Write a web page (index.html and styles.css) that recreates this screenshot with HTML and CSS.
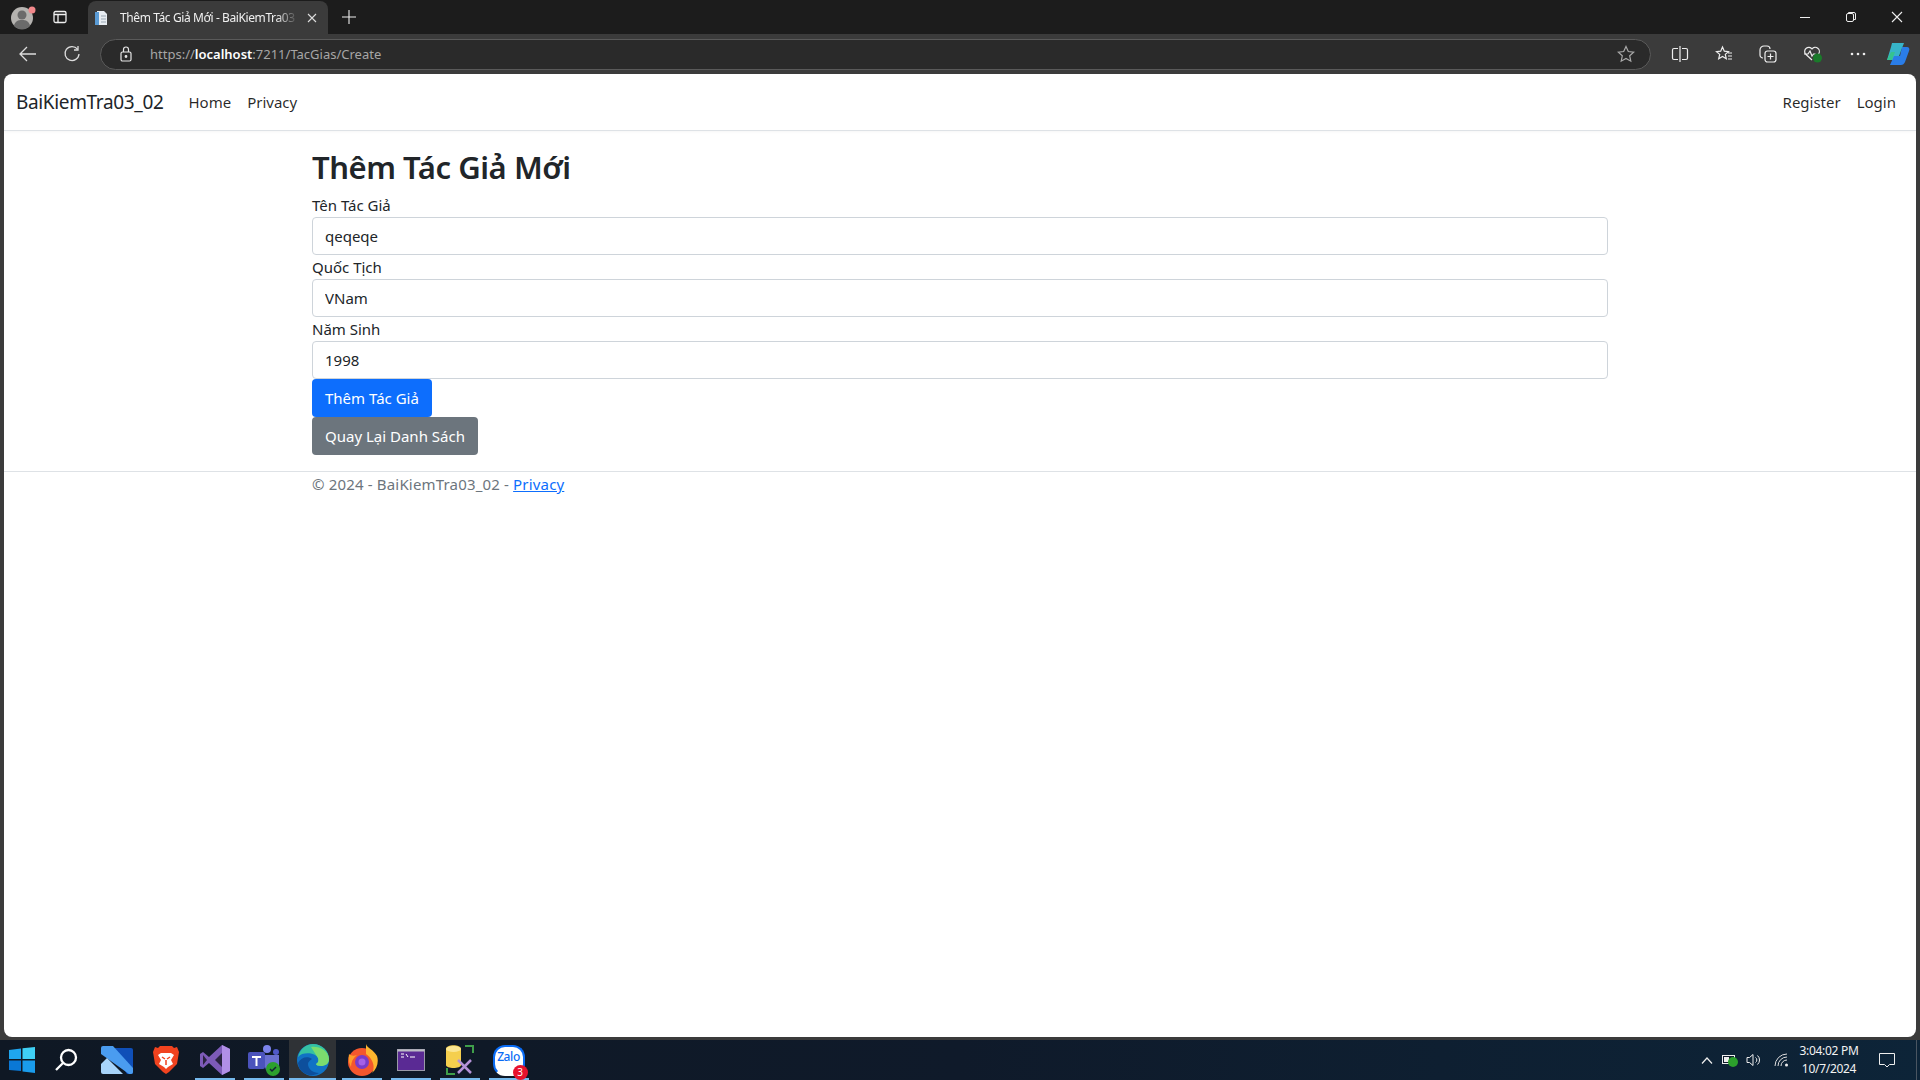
FILE: index.html
```html
<!DOCTYPE html>
<html lang="en">
<head>
  <meta charset="UTF-8">
  <meta name="viewport" content="width=device-width, initial-scale=1.0">
  <title>Thêm Tác Giả Mới - BaiKiemTra03_02</title>
  <link rel="stylesheet" href="styles.css">
</head>
<body>
  <div class="titlebar">
    <div class="avatar">
      <svg width="28" height="28" viewBox="0 0 28 28"><circle cx="13" cy="15" r="11" fill="#b5b3b0"/><circle cx="13" cy="12" r="4.5" fill="#6b6b6b"/><path d="M5 23c1-5 4-6 8-6s7 1 8 6a11 11 0 0 1-16 0z" fill="#6b6b6b"/><circle cx="23" cy="7" r="3.5" fill="#f2888b"/></svg>
    </div>
    <div class="bar-btn sidebar-btn">
      <svg width="16" height="16" viewBox="0 0 16 16" fill="none" stroke="#eee" stroke-width="1.3"><rect x="2" y="2.5" width="12" height="11" rx="1.5"/><path d="M2 5.5h12M6 5.5v8"/></svg>
    </div>
    <div class="tab">
      <svg class="tab-icon" width="16" height="16" viewBox="0 0 16 16"><path d="M3 1h7l3 3v11H3z" fill="#e8edf2"/><path d="M1 2h4v13H1z" fill="#5a9bd5"/><path d="M7 6h5M7 9h5M7 12h5" stroke="#9aa7b3"/></svg>
      <span class="tab-title">Thêm Tác Giả Mới - BaiKiemTra03</span>
      <svg width="10" height="10" viewBox="0 0 10 10" stroke="#ddd" stroke-width="1.1"><path d="M1 1l8 8M9 1l-8 8"/></svg>
    </div>
    <div class="bar-btn new-tab">
      <svg width="14" height="14" viewBox="0 0 14 14" stroke="#eee" stroke-width="1.1"><path d="M7 0v14M0 7h14"/></svg>
    </div>
    <div class="window-btns">
      <svg width="46" height="12" viewBox="0 0 46 12" stroke="#eee"><path d="M18 6.500h10"/></svg>
      <svg width="46" height="12" viewBox="0 0 46 12" fill="none" stroke="#eee"><rect x="18.500" y="2.500" width="7" height="8" rx="1.500"/><path d="M20.500 2.500v-1h5.500a1.500 1.500 0 0 1 1.500 1.500v5.500h-1.500"/></svg>
      <svg width="46" height="12" viewBox="0 0 46 12" stroke="#eee" stroke-width="1.100"><path d="M18 1l10 10M28 1l-10 10"/></svg>
    </div>
  </div>

  <div class="toolbar">
    <svg class="back" width="18" height="16" viewBox="0 0 18 16" fill="none" stroke="#ddd" stroke-width="1.300"><path d="M17 8H1M8 1L1 8l7 7"/></svg>
    <svg class="reload" width="18" height="18" viewBox="0 0 18 18" fill="none" stroke="#ddd" stroke-width="1.300"><path d="M14.500 4.200A7 7 0 1 0 16 9"/><path d="M15 1v4h-4"/></svg>
    <div class="address">
      <svg class="lock" width="14" height="16" viewBox="0 0 14 16" fill="none" stroke="#e6e6e6" stroke-width="1.200"><rect x="2" y="6" width="10" height="9" rx="1.500"/><path d="M4.500 6V3.500a2.500 2.500 0 0 1 5 0V6"/><circle cx="7" cy="10.500" r=".8" fill="#e6e6e6"/></svg>
      <span class="url">https://<b>localhost</b>:7211/TacGias/Create</span>
      <svg class="star" width="18" height="18" viewBox="0 0 18 18" fill="none" stroke="#aaa" stroke-width="1.200"><path d="M9 1.500l2.300 5 5.400.6-4 3.700 1.100 5.400L9 13.500l-4.800 2.700 1.100-5.400-4-3.700 5.400-.6z"/></svg>
    </div>
    <div class="tools">
      <svg width="18" height="18" viewBox="0 0 18 18" fill="none" stroke="#eee" stroke-width="1.200"><path d="M7 3.500H3A1.500 1.500 0 0 0 1.500 5v8A1.500 1.500 0 0 0 3 14.500h4M11 3.500h4A1.500 1.500 0 0 1 16.500 5v8a1.500 1.500 0 0 1-1.500 1.500h-4M9 1v16"/></svg>
      <svg width="18" height="18" viewBox="0 0 18 18" fill="none" stroke="#eee" stroke-width="1.200"><path d="M7.500 2l1.800 4.200 4.200.4-3.200 2.800 1 4.400-3.800-2.300-3.800 2.300 1-4.400L1.500 6.600l4.200-.4zM13 8h4M13 11h4M13 14h4"/></svg>
      <svg width="18" height="18" viewBox="0 0 18 18" fill="none" stroke="#eee" stroke-width="1.200"><rect x="6" y="6" width="11" height="11" rx="2.500"/><path d="M11.500 8.500v6M8.500 11.500h6M4 13a3 3 0 0 1-3-3V5a4 4 0 0 1 4-4h3a3 3 0 0 1 3 3"/></svg>
      <svg width="20" height="18" viewBox="0 0 20 18" fill="none" stroke="#eee" stroke-width="1.200"><path d="M9 15L2.500 9A4 4 0 0 1 9 4a4 4 0 0 1 6.500 5M1 9h4l2-3 2 5 1.500-2h2"/><circle cx="14.500" cy="13" r="4.500" fill="#1a7a2a" stroke="none"/></svg>
      <svg width="18" height="18" viewBox="0 0 18 18" fill="#eee"><circle cx="3" cy="9" r="1.300"/><circle cx="9" cy="9" r="1.300"/><circle cx="15" cy="9" r="1.300"/></svg>
      <svg class="copilot" width="26" height="24" viewBox="0 0 26 24"><path d="M8 1h12l-5 13a5 5 0 0 1-5 4H3l4-13z" fill="#37b4c8"/><path d="M18 5h5c2 0 3 2 2 4l-4 11c-1 2-2 3-4 3H6l4-9h6z" fill="#2a7de8"/><path d="M3 18l4-8h4l-3 8z" fill="#35c38f"/></svg>
    </div>
  </div>

  <div class="page">
    <nav class="navbar">
      <a class="brand">BaiKiemTra03_02</a>
      <a class="nav-link">Home</a>
      <a class="nav-link">Privacy</a>
      <div class="nav-right">
        <a class="nav-link">Register</a>
        <a class="nav-link">Login</a>
      </div>
    </nav>
    <main class="container">
      <h1>Thêm Tác Giả Mới</h1>
      <label class="form-label">Tên Tác Giả</label>
      <input class="form-control" value="qeqeqe">
      <label class="form-label">Quốc Tịch</label>
      <input class="form-control" value="VNam">
      <label class="form-label">Năm Sinh</label>
      <input class="form-control" value="1998">
      <a class="btn btn-primary">Thêm Tác Giả</a>
      <a class="btn btn-secondary">Quay Lại Danh Sách</a>
    </main>
    <footer class="footer">
      <div class="container">© 2024 - BaiKiemTra03_02 - <a class="footer-link">Privacy</a></div>
    </footer>
  </div>

  <div class="taskbar">
    <div class="task-item first">
      <svg width="28" height="28" viewBox="0 0 28 28"><path d="M1 4l12-1.500V13H1z" fill="#1fa6ef"/><path d="M14.500 2.300L27 1v12H14.500z" fill="#3fd0f5"/><path d="M1 14.500h12V25L1 24z" fill="#0a78d6"/><path d="M14.500 14.500H27V27l-12.500-1.500z" fill="#1a9cec"/></svg>
    </div>
    <div class="task-item first">
      <svg width="24" height="24" viewBox="0 0 24 24" fill="none" stroke="#fff" stroke-width="2.300"><circle cx="14.500" cy="9.500" r="7.500"/><path d="M9 15l-7 7"/></svg>
    </div>
    <div class="task-item explorer">
      <svg width="32" height="28" viewBox="0 0 32 28"><path d="M10 2h20a2 2 0 0 1 2 2v22a2 2 0 0 1-2 2h-4z" fill="#0f4fb8"/><path d="M2 0h10l20 22v4a2 2 0 0 1-2 2h-2L0 8V2a2 2 0 0 1 2-2z" fill="#4a9cf0"/><path d="M0 18l6-6 16 16H2a2 2 0 0 1-2-2z" fill="#a8d4fa"/></svg>
    </div>
    <div class="task-item plain">
      <svg width="26" height="30" viewBox="0 0 26 30"><path d="M7 1h12l2 2 3-1 2 5-2 12-8 8-3 2-3-2-8-8L0 7l2-5 3 1z" fill="#f1431f"/><path d="M8 8h10l3 2-3 5 2 4-5 3-2 2-2-2-5-3 2-4-3-5z" fill="#fff"/><path d="M9 12l3 2M17 12l-3 2M13 15v5" stroke="#f1431f" stroke-width="1.500"/></svg>
    </div>
    <div class="task-item">
      <svg width="32" height="32" viewBox="0 0 32 32"><path d="M23 1l8 4v22l-8 4-13-12-6 5-3-2V10l3-2 6 5z" fill="#7d5bb8"/><path d="M23 1l8 4v22l-8 4z" fill="#b18fe6"/><path d="M23 9l-7 7 7 7z" fill="#2a2440"/><path d="M4 11l4 5-4 5z" fill="#2a2440"/></svg>
    </div>
    <div class="task-item">
      <svg width="34" height="32" viewBox="0 0 34 32"><circle cx="20" cy="5" r="4" fill="#7b83eb"/><circle cx="29" cy="8" r="3" fill="#5059c9"/><path d="M14 11h18v10a7 7 0 0 1-14 2h-4z" fill="#6a70d0"/><rect x="1" y="8" width="17" height="17" rx="2" fill="#4b53bc"/><path d="M5 12h9v2h-3.500v8h-2v-8H5z" fill="#fff"/><circle cx="26" cy="25" r="7" fill="#2ca02c"/><path d="M23 25l2 2 4-4" fill="none" stroke="#123" stroke-width="1.500"/></svg>
    </div>
    <div class="task-item edge">
      <svg width="32" height="32" viewBox="0 0 32 32"><circle cx="16" cy="16" r="16" fill="#1172c4"/><path d="M1 13C3 5 9 0 16 0c9 0 16 7 16 15 0 5-4 7-8 7-3 0-5-1-5-2 2-1 3-3 2-6-2-5-15-7-20-1z" fill="#35c1a2"/><path d="M14 3c8-1 17 3 18 12 0 5-4 7-8 7-3 0-5-1-5-2 2-1 3-3 2-6z" fill="#7bdc6e"/><path d="M11 20c0 5 5 9 11 9-8 5-20 1-21-10 3-6 10-7 14-4-2 1-4 3-4 5z" fill="#0d4f9c"/></svg>
    </div>
    <div class="task-item">
      <svg width="32" height="32" viewBox="0 0 32 32"><circle cx="16" cy="18" r="14" fill="#f4572d"/><path d="M20 0c1 4 8 6 11 12 2 6 0 13-5 17 4-7 0-15-6-19z" fill="#ffb52e"/><path d="M3 10c2 2 5 2 8 1-4 3-6 7-6 12-2-4-3-8-2-13z" fill="#ff9d28"/><circle cx="16" cy="18" r="7" fill="#7a3cc7"/><circle cx="16" cy="18" r="3.500" fill="#a561e6"/></svg>
    </div>
    <div class="task-item">
      <svg width="28" height="22" viewBox="0 0 28 22"><rect x=".5" y=".5" width="27" height="21" fill="#5a2a94" stroke="#9a9aa8"/><path d="M.5.500h27v2H.5z" fill="#bdbdc6"/><path d="M4 5h3M4 8h3M9 5l2 3M13 8h5" stroke="#fff"/></svg>
    </div>
    <div class="task-item">
      <svg width="30" height="32" viewBox="0 0 30 32"><path d="M1 5c0-5 15-5 15 0v16c0 4-15 4-15 0z" fill="#f5cf4e"/><ellipse cx="8.500" cy="5" rx="7.500" ry="3" fill="#fbe692"/><path d="M20 2h8v7M2 24v6h8" fill="none" stroke="#3f9f4a" stroke-width="2"/><path d="M13 29l13-13M13 16l13 13" stroke="#b593d8" stroke-width="2.500"/></svg>
    </div>
    <div class="task-item zalo">
      <div class="zalo-bubble">
        <span class="zalo-text">Zalo</span>
        <span class="zalo-badge">3</span>
      </div>
    </div>
    <div class="tray">
      <svg class="chevron" width="12" height="7" viewBox="0 0 12 7" fill="none" stroke="#eee" stroke-width="1.200"><path d="M1 6.500L6 1l5 5.500"/></svg>
      <svg class="battery" width="16" height="13" viewBox="0 0 16 13"><rect x=".5" y="1.500" width="12" height="8" fill="#0f1a2a" stroke="#eee"/><rect x="2" y="3" width="5" height="5" fill="#eee"/><circle cx="11" cy="8" r="5" fill="#2ca02c"/></svg>
      <svg class="speaker" width="16" height="14" viewBox="0 0 16 14" fill="none" stroke="#eee"><path d="M1 4.500h2.500L7 1.500v11l-3.500-3H1zM9.500 4.500a3 3 0 0 1 0 5M11.500 2.500a6 6 0 0 1 0 9"/></svg>
      <svg class="wifi" width="16" height="14" viewBox="0 0 16 14" fill="none" stroke="#ddd"><path d="M1 13A12 12 0 0 1 13 1M4 13a9 9 0 0 1 9-9M7 13a6 6 0 0 1 6-6"/><circle cx="12.500" cy="12" r="1.500" fill="#eee" stroke="none"/></svg>
      <div class="clock">
        <span>3:04:02 PM</span>
        <span>10/7/2024</span>
      </div>
      <svg class="notify" width="16" height="16" viewBox="0 0 16 16" fill="none" stroke="#eee"><path d="M.5 1.500h15v11h-5L8 15l-2.500-2.500h-5z"/></svg>
      <div class="show-desktop"></div>
    </div>
  </div>
</body>
</html>
```

FILE: styles.css
```css
* {
  box-sizing: border-box;
}
html, body {
  margin: 0;
  height: 100%;
  overflow: hidden;
}
body {
  display: flex;
  flex-direction: column;
  height: 1080px;
  background: #3b3b3b;
  font-family: "Noto Sans", sans-serif;
  font-size: 15px;
  line-height: 24px;
  color: #212529;
}

/* browser chrome */
.titlebar {
  display: flex;
  align-items: center;
  height: 34px;
  background: #1c1c1c;
  color: #eee;
}
.avatar {
  display: flex;
  width: 44px;
  padding-left: 9px;
}
.bar-btn {
  display: flex;
  align-items: center;
  justify-content: center;
}
.sidebar-btn {
  width: 32px;
}
.tab {
  display: flex;
  align-items: center;
  align-self: flex-end;
  width: 240px;
  height: 33px;
  margin-left: 12px;
  padding: 0 11px 0 6px;
  background: #3b3b3b;
  border-radius: 8px 8px 0 0;
}
.tab-icon {
  flex: none;
  margin-right: 10px;
}
.tab-title {
  flex: 1;
  overflow: hidden;
  white-space: nowrap;
  font-size: 12px;
  letter-spacing: -0.4px;
  color: #f0f0f0;
  -webkit-mask-image: linear-gradient(to right, #000 88%, transparent 100%);
  mask-image: linear-gradient(to right, #000 88%, transparent 100%);
  margin-right: 9px;
}
.new-tab {
  width: 42px;
}
.window-btns {
  display: flex;
  margin-left: auto;
}
.toolbar {
  display: flex;
  align-items: center;
  height: 40px;
  padding: 0 9px 0 19px;
}
.back {
  margin-right: 26px;
}
.reload {
  margin-right: 19px;
}
.address {
  display: flex;
  flex: none;
  align-items: center;
  width: 1551px;
  height: 31px;
  padding: 0 15px 0 18px;
  background: #2a2a2a;
  border: 1px solid #5a5a5a;
  border-radius: 16px;
}
.lock {
  margin-right: 17px;
}
.url {
  flex: 1;
  font-size: 13px;
  color: #a6a6a6;
}
.url b {
  font-weight: 600;
  color: #fff;
}
.tools {
  display: flex;
  align-items: center;
  gap: 26px;
  margin-left: 20px;
}
.copilot {
  margin-left: -9px;
}

/* page */
.page {
  flex: 1;
  margin: 0 4px 3px;
  background: #fff;
  border-radius: 8px;
  overflow: hidden;
}
.navbar {
  display: flex;
  align-items: center;
  height: 57px;
  padding: 0 12px;
  border-bottom: 1px solid #dee2e6;
  box-shadow: 0 1px 3px rgba(0, 0, 0, 0.04);
}
.brand {
  margin-right: 17px;
  font-size: 19px;
  letter-spacing: -0.35px;
}
.nav-link {
  padding: 0 8px;
  color: rgba(0, 0, 0, 0.85);
}
.nav-right {
  display: flex;
  margin-left: auto;
}
.container {
  display: flex;
  flex-direction: column;
  align-items: flex-start;
  width: 1320px;
  margin: 0 auto;
  padding: 0 12px;
}
h1 {
  margin: 17px 0 7px;
  font-size: 31px;
  line-height: 38px;
  font-weight: 600;
  letter-spacing: -0.45px;
}
.form-label {
  height: 24px;
}
.form-control {
  width: 100%;
  height: 38px;
  padding: 6px 12px;
  border: 1px solid #ced4da;
  border-radius: 4px;
  font: inherit;
  color: #212529;
  outline: none;
}
.btn {
  height: 38px;
  padding: 6px 12px;
  border: 1px solid transparent;
  border-radius: 4px;
  color: #fff;
}
.btn-primary {
  background: #0d6efd;
}
.btn-secondary {
  background: #6c757d;
}
.footer {
  margin-top: 16px;
  height: 38px;
  border-top: 1px solid #dee2e6;
  line-height: 24px;
  color: #6c757d;
  letter-spacing: 0.17px;
}
.footer .container {
  display: block;
}
.footer-link {
  color: #0d6efd;
  text-decoration: underline;
}

/* taskbar */
.taskbar {
  display: flex;
  align-items: center;
  height: 40px;
  background: linear-gradient(to right, #0f1824, #0f1a2a 50%, #0d2438);
}
.task-item {
  display: flex;
  flex: none;
  align-items: center;
  justify-content: center;
  width: 49px;
  height: 40px;
  background: linear-gradient(#76b9ed, #76b9ed) center bottom / 40px 2px no-repeat;
}
.task-item.first {
  width: 44px;
  background: none;
}
.task-item.plain {
  background: none;
}
.task-item.explorer {
  margin-left: 4px;
  background: none;
}
.task-item.edge {
  background:
    linear-gradient(#76b9ed, #76b9ed) center bottom / 47px 2px no-repeat,
    linear-gradient(#2f3236, #2f3236) center / 47px 40px no-repeat;
}
.zalo-bubble {
  position: relative;
  display: flex;
  justify-content: center;
  width: 32px;
  height: 31px;
  background: #fff;
  border: 2px solid #0a6cf5;
  border-bottom-color: #fff;
  border-radius: 12px;
}
.zalo-text {
  font-size: 12px;
  line-height: 20px;
  font-weight: 500;
  letter-spacing: -0.4px;
  color: #0a6cf5;
}
.zalo-badge {
  position: absolute;
  right: -5px;
  bottom: -6px;
  width: 15px;
  height: 15px;
  background: #e8112d;
  border-radius: 50%;
  font-size: 10px;
  line-height: 15px;
  text-align: center;
  color: #fff;
}
.tray {
  display: flex;
  align-items: center;
  align-self: stretch;
  margin-left: auto;
}
.chevron {
  margin-right: 9px;
}
.battery {
  margin-right: 8px;
}
.speaker {
  margin-right: 12px;
}
.clock {
  display: flex;
  flex-direction: column;
  align-items: center;
  width: 64px;
  margin: 0 18px 0 7px;
  font-size: 12px;
  line-height: 18px;
  letter-spacing: -0.3px;
  color: #f2f2f2;
}
.show-desktop {
  align-self: stretch;
  width: 4px;
  margin-left: 21px;
  border-left: 1px solid #4a5561;
}
```
